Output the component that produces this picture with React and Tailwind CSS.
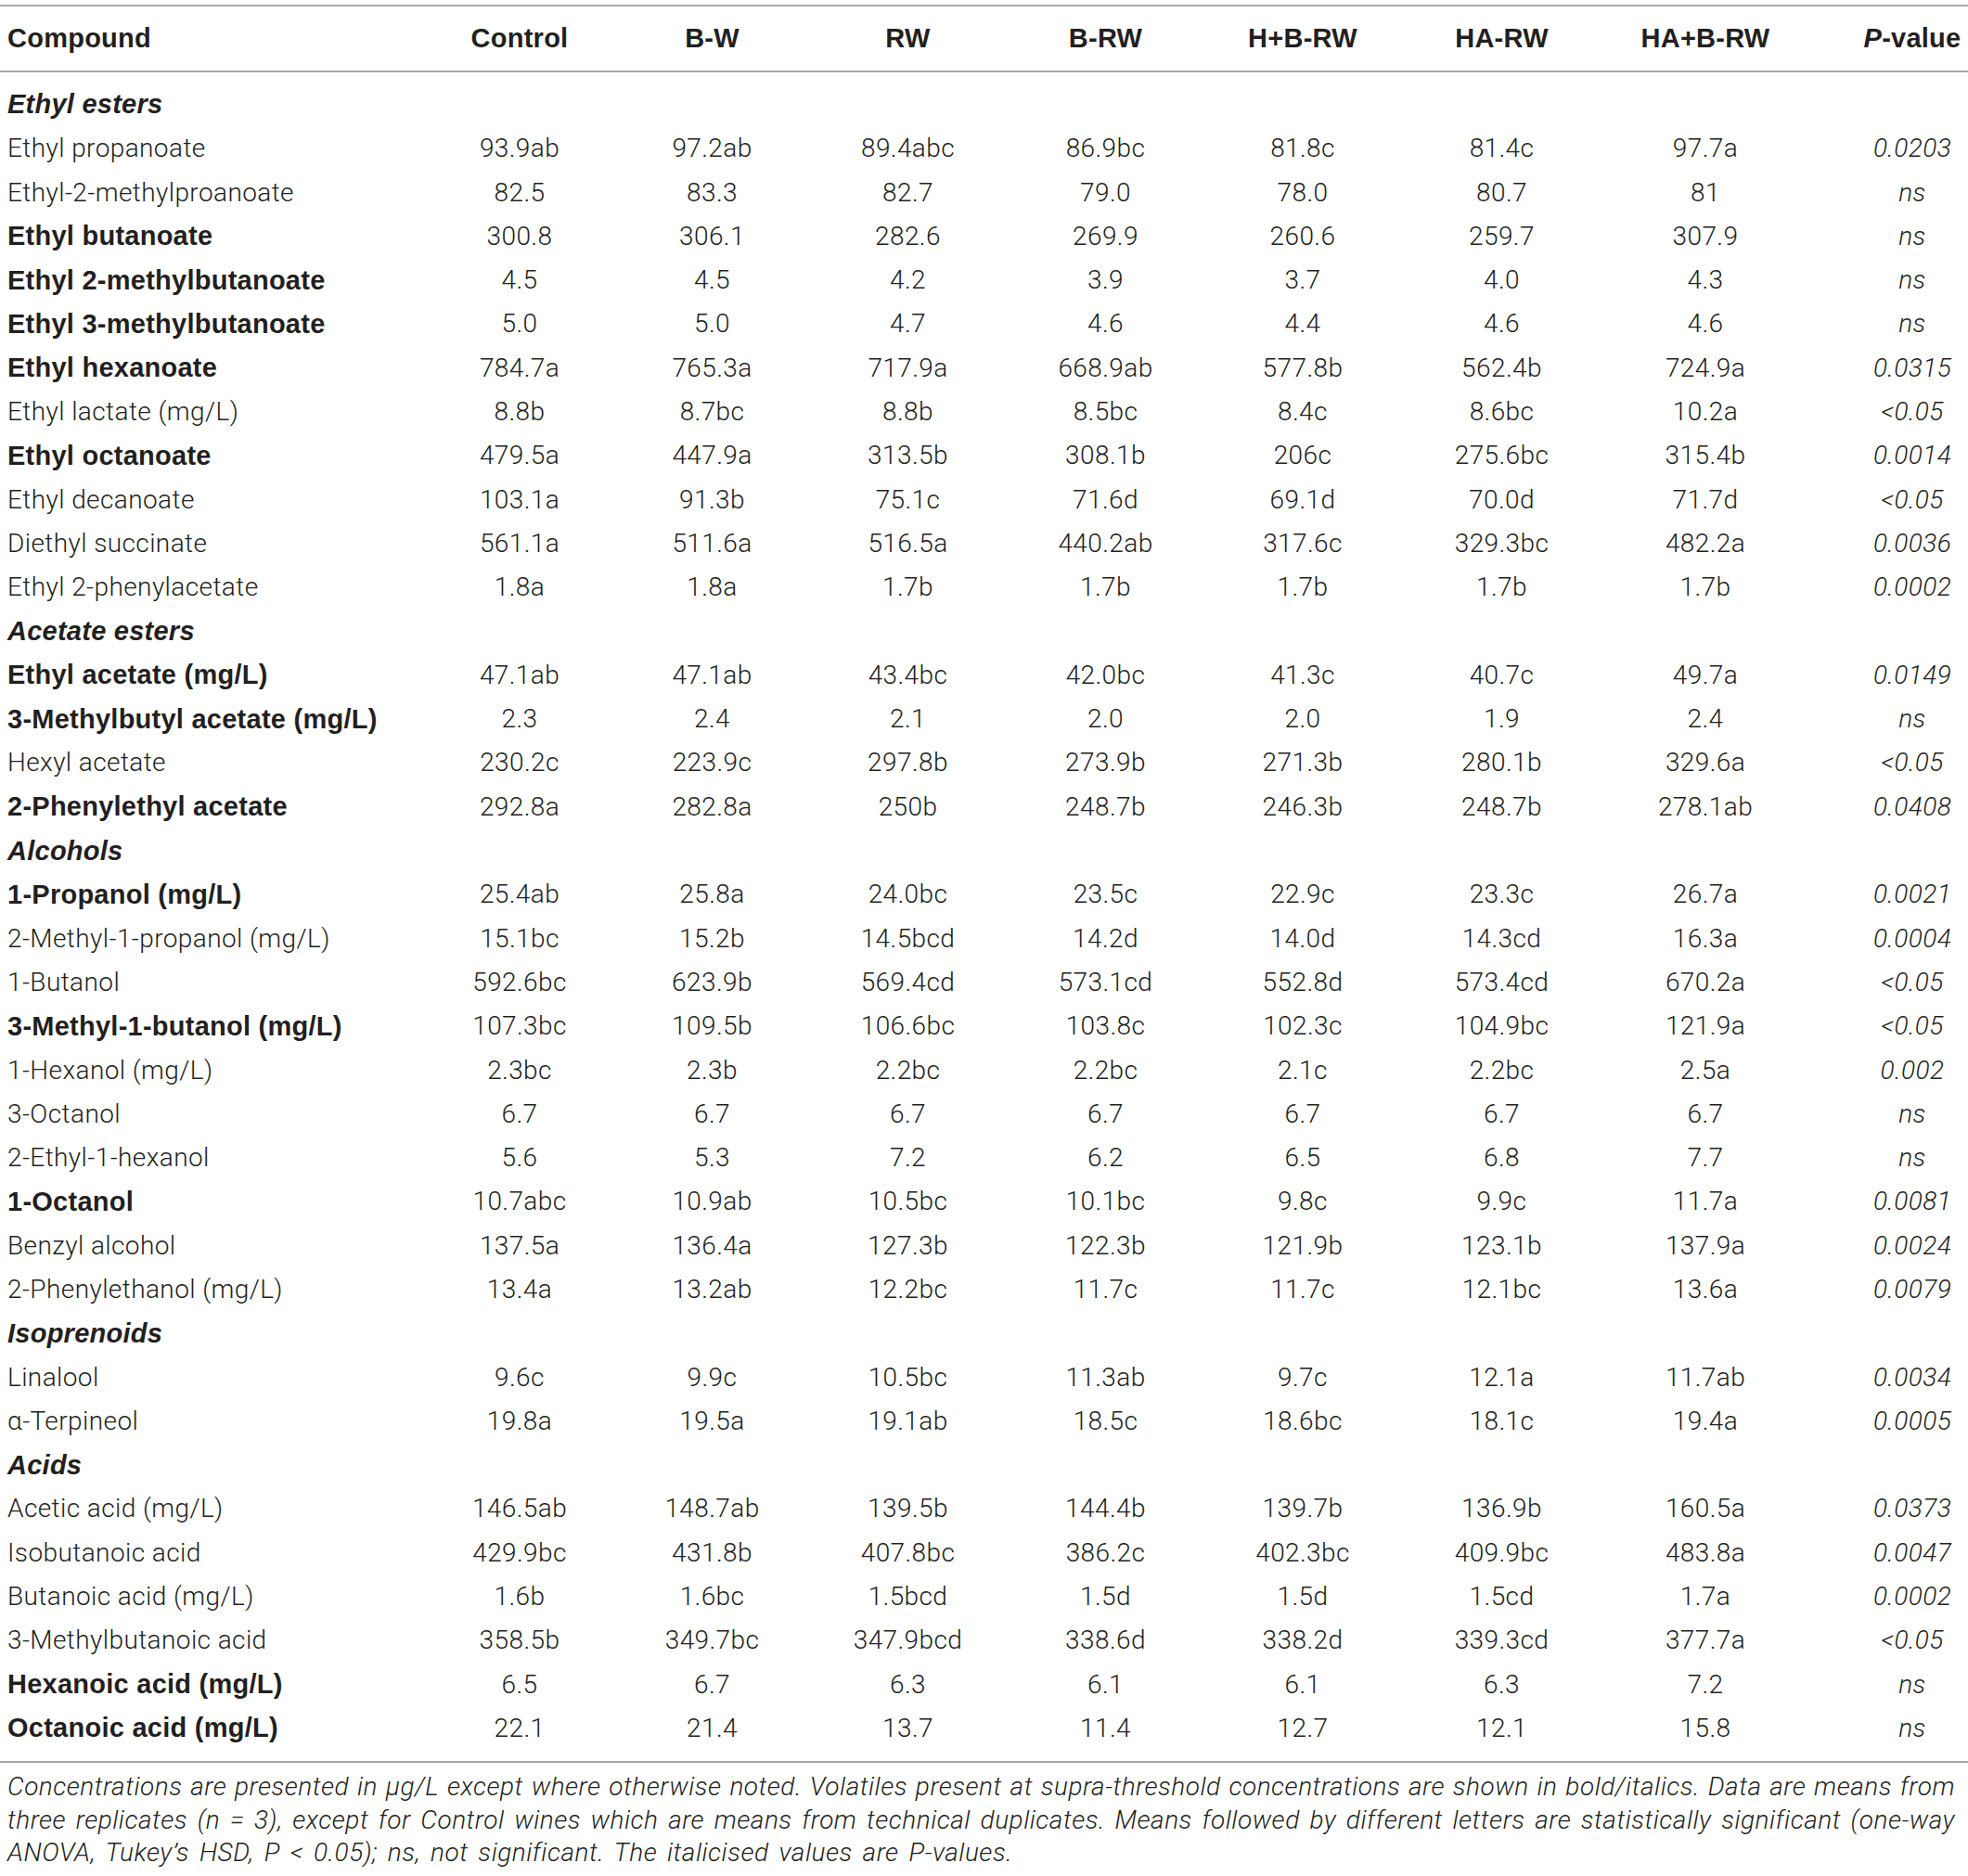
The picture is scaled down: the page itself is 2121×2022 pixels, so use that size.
const cols = 'grid grid-cols-[457px_206px_209px_213px_213px_212px_217px_222px_172px] items-center'

const heads = ['Control', 'B-W', 'RW', 'B-RW', 'H+B-RW', 'HA-RW', 'HA+B-RW']

// [name, bold, values..., p]
const sections = [
  ['Ethyl esters', [
    ['Ethyl propanoate', false, '93.9ab', '97.2ab', '89.4abc', '86.9bc', '81.8c', '81.4c', '97.7a', '0.0203'],
    ['Ethyl-2-methylproanoate', false, '82.5', '83.3', '82.7', '79.0', '78.0', '80.7', '81', 'ns'],
    ['Ethyl butanoate', true, '300.8', '306.1', '282.6', '269.9', '260.6', '259.7', '307.9', 'ns'],
    ['Ethyl 2-methylbutanoate', true, '4.5', '4.5', '4.2', '3.9', '3.7', '4.0', '4.3', 'ns'],
    ['Ethyl 3-methylbutanoate', true, '5.0', '5.0', '4.7', '4.6', '4.4', '4.6', '4.6', 'ns'],
    ['Ethyl hexanoate', true, '784.7a', '765.3a', '717.9a', '668.9ab', '577.8b', '562.4b', '724.9a', '0.0315'],
    ['Ethyl lactate (mg/L)', false, '8.8b', '8.7bc', '8.8b', '8.5bc', '8.4c', '8.6bc', '10.2a', '<0.05'],
    ['Ethyl octanoate', true, '479.5a', '447.9a', '313.5b', '308.1b', '206c', '275.6bc', '315.4b', '0.0014'],
    ['Ethyl decanoate', false, '103.1a', '91.3b', '75.1c', '71.6d', '69.1d', '70.0d', '71.7d', '<0.05'],
    ['Diethyl succinate', false, '561.1a', '511.6a', '516.5a', '440.2ab', '317.6c', '329.3bc', '482.2a', '0.0036'],
    ['Ethyl 2-phenylacetate', false, '1.8a', '1.8a', '1.7b', '1.7b', '1.7b', '1.7b', '1.7b', '0.0002'],
  ]],
  ['Acetate esters', [
    ['Ethyl acetate (mg/L)', true, '47.1ab', '47.1ab', '43.4bc', '42.0bc', '41.3c', '40.7c', '49.7a', '0.0149'],
    ['3-Methylbutyl acetate (mg/L)', true, '2.3', '2.4', '2.1', '2.0', '2.0', '1.9', '2.4', 'ns'],
    ['Hexyl acetate', false, '230.2c', '223.9c', '297.8b', '273.9b', '271.3b', '280.1b', '329.6a', '<0.05'],
    ['2-Phenylethyl acetate', true, '292.8a', '282.8a', '250b', '248.7b', '246.3b', '248.7b', '278.1ab', '0.0408'],
  ]],
  ['Alcohols', [
    ['1-Propanol (mg/L)', true, '25.4ab', '25.8a', '24.0bc', '23.5c', '22.9c', '23.3c', '26.7a', '0.0021'],
    ['2-Methyl-1-propanol (mg/L)', false, '15.1bc', '15.2b', '14.5bcd', '14.2d', '14.0d', '14.3cd', '16.3a', '0.0004'],
    ['1-Butanol', false, '592.6bc', '623.9b', '569.4cd', '573.1cd', '552.8d', '573.4cd', '670.2a', '<0.05'],
    ['3-Methyl-1-butanol (mg/L)', true, '107.3bc', '109.5b', '106.6bc', '103.8c', '102.3c', '104.9bc', '121.9a', '<0.05'],
    ['1-Hexanol (mg/L)', false, '2.3bc', '2.3b', '2.2bc', '2.2bc', '2.1c', '2.2bc', '2.5a', '0.002'],
    ['3-Octanol', false, '6.7', '6.7', '6.7', '6.7', '6.7', '6.7', '6.7', 'ns'],
    ['2-Ethyl-1-hexanol', false, '5.6', '5.3', '7.2', '6.2', '6.5', '6.8', '7.7', 'ns'],
    ['1-Octanol', true, '10.7abc', '10.9ab', '10.5bc', '10.1bc', '9.8c', '9.9c', '11.7a', '0.0081'],
    ['Benzyl alcohol', false, '137.5a', '136.4a', '127.3b', '122.3b', '121.9b', '123.1b', '137.9a', '0.0024'],
    ['2-Phenylethanol (mg/L)', false, '13.4a', '13.2ab', '12.2bc', '11.7c', '11.7c', '12.1bc', '13.6a', '0.0079'],
  ]],
  ['Isoprenoids', [
    ['Linalool', false, '9.6c', '9.9c', '10.5bc', '11.3ab', '9.7c', '12.1a', '11.7ab', '0.0034'],
    ['α-Terpineol', false, '19.8a', '19.5a', '19.1ab', '18.5c', '18.6bc', '18.1c', '19.4a', '0.0005'],
  ]],
  ['Acids', [
    ['Acetic acid (mg/L)', false, '146.5ab', '148.7ab', '139.5b', '144.4b', '139.7b', '136.9b', '160.5a', '0.0373'],
    ['Isobutanoic acid', false, '429.9bc', '431.8b', '407.8bc', '386.2c', '402.3bc', '409.9bc', '483.8a', '0.0047'],
    ['Butanoic acid (mg/L)', false, '1.6b', '1.6bc', '1.5bcd', '1.5d', '1.5d', '1.5cd', '1.7a', '0.0002'],
    ['3-Methylbutanoic acid', false, '358.5b', '349.7bc', '347.9bcd', '338.6d', '338.2d', '339.3cd', '377.7a', '<0.05'],
    ['Hexanoic acid (mg/L)', true, '6.5', '6.7', '6.3', '6.1', '6.1', '6.3', '7.2', 'ns'],
    ['Octanoic acid (mg/L)', true, '22.1', '21.4', '13.7', '11.4', '12.7', '12.1', '15.8', 'ns'],
  ]],
]

const bold = "font-['Liberation_Sans',Arial,sans-serif] font-bold text-[29px] tracking-[0.25px]"

function Row({ r }) {
  const [name, isBold, ...vals] = r
  const p = vals.pop()
  return (
    <div className={`${cols} h-[47.3px]`}>
      <div className={`pl-[8px] whitespace-nowrap ${isBold ? bold : ''}`}>{name}</div>
      {vals.map((v, i) => (
        <div key={i} className="text-center">{v}</div>
      ))}
      <div className="pl-[52px] text-center italic">{p}</div>
    </div>
  )
}

export default function App() {
  return (
    <div className="w-[2121px] h-[2022px] bg-white pt-[5px] text-[#231f20] font-['Roboto',sans-serif] font-light text-[28px] tracking-[0.4px] leading-none">
      {/* Header */}
      <div className={`${cols} h-[73px] border-y-2 border-[#a8a8a8]`}>
        <div className={`pl-[8px] ${bold}`}>Compound</div>
        {heads.map(h => (
          <div key={h} className={`text-center ${bold}`}>{h}</div>
        ))}
        <div className={`pl-[52px] text-center ${bold}`}>
          <i>P</i>-value
        </div>
      </div>

      <div className="pt-[11.35px] pb-[11.25px] border-b-2 border-[#a8a8a8]">
        {sections.map(([title, rows]) => (
          <div key={title}>
            <div className={`h-[47.3px] flex items-center pl-[8px] italic ${bold}`}>{title}</div>
            {rows.map(r => <Row key={r[0]} r={r} />)}
          </div>
        ))}
      </div>

      {/* Footnote */}
      <div className="pt-[8.25px] pl-[8px] pr-[14px] italic leading-[35.5px] tracking-[0.5px]">
        <p className="text-justify [text-align-last:justify]">
          Concentrations are presented in μg/L except where otherwise noted. Volatiles present at supra-threshold concentrations are shown in bold/italics. Data are means from
        </p>
        <p className="text-justify [text-align-last:justify]">
          three replicates (n = 3), except for Control wines which are means from technical duplicates. Means followed by different letters are statistically significant (one-way
        </p>
        <p className="[word-spacing:3.6px]">ANOVA, Tukey’s HSD, P &lt; 0.05); ns, not significant. The italicised values are P-values.</p>
      </div>
    </div>
  )
}
